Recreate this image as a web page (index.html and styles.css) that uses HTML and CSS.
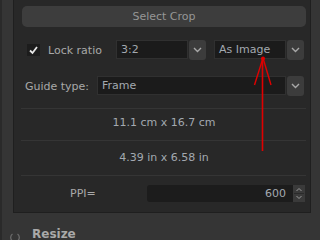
FILE: index.html
```html
<!DOCTYPE html>
<html lang="en">

<head>
  <meta charset="UTF-8">
  <meta name="viewport" content="width=device-width, initial-scale=1.0">
  <title>Crop</title>
  <link rel="stylesheet" href="styles.css">
</head>

<body>
  <div class="app">
    <div class="edge"></div>
    <div class="main">
      <div class="panel">
        <div class="big-button">Select Crop</div>

        <div class="row row-lock">
          <span class="check">
            <svg width="13" height="12" viewBox="0 0 13 12">
              <path d="M3 6.5 L5.5 9 L10 3" fill="none" stroke="#e6e6e6" stroke-width="1.8" />
            </svg>
          </span>
          <span class="label label-lock">Lock ratio</span>
          <span class="combo combo-small">3:2</span>
          <span class="drop">
            <svg width="9" height="6" viewBox="0 0 9 6"><path d="M1 1 L4.5 4.5 L8 1" fill="none" stroke="#a8a8a8" stroke-width="1.4" /></svg>
          </span>
          <span class="combo combo-small combo-second">As Image</span>
          <span class="drop">
            <svg width="9" height="6" viewBox="0 0 9 6"><path d="M1 1 L4.5 4.5 L8 1" fill="none" stroke="#a8a8a8" stroke-width="1.4" /></svg>
          </span>
        </div>

        <div class="row row-guide">
          <span class="label label-guide">Guide type:</span>
          <span class="combo combo-wide">Frame</span>
          <span class="drop">
            <svg width="9" height="6" viewBox="0 0 9 6"><path d="M1 1 L4.5 4.5 L8 1" fill="none" stroke="#a8a8a8" stroke-width="1.4" /></svg>
          </span>
        </div>

        <hr class="sep sep-first" />
        <div class="info info-cm">11.1 cm x 16.7 cm</div>
        <hr class="sep" />
        <div class="info info-in">4.39 in x 6.58 in</div>
        <hr class="sep" />

        <div class="row row-ppi">
          <span class="label label-ppi">PPI=</span>
          <span class="spin-value">600</span>
          <span class="spin-btns">
            <svg width="12" height="17" viewBox="0 0 12 17">
              <path d="M3.5 6 L6 3.5 L8.5 6" fill="none" stroke="#9a9a9a" stroke-width="1" />
              <line x1="1" y1="8.5" x2="11" y2="8.5" stroke="#2a2a2a" />
              <path d="M3.5 11 L6 13.5 L8.5 11" fill="none" stroke="#9a9a9a" stroke-width="1" />
            </svg>
          </span>
        </div>
      </div>

      <div class="section">
        <svg class="power" width="12" height="12" viewBox="0 0 12 12">
          <path d="M3.5 3 A4.3 4.3 0 1 0 8.5 3" fill="none" stroke="#6a6a6a" stroke-width="1.3" />
        </svg>
        <span class="section-title">Resize</span>
      </div>
    </div>
  </div>

  <svg class="annotation" width="320" height="240" viewBox="0 0 320 240">
    <line x1="262.5" y1="58" x2="262.5" y2="151" stroke="#e00000" stroke-width="1.6" />
    <line x1="263" y1="58" x2="254.5" y2="85" stroke="#e00000" stroke-width="1.4" />
    <line x1="263" y1="58" x2="271" y2="85" stroke="#e00000" stroke-width="1.4" />
    <circle cx="263" cy="58.5" r="2" fill="#e00000" />
  </svg>
</body>

</html>
```

FILE: styles.css
```css
body {
  margin: 0;
  font-family: "DejaVu Sans", Verdana, sans-serif;
  font-size: 11px;
  color: #a9a9a9;
  background-color: #353535;
}

.app {
  display: flex;
  width: 320px;
  height: 240px;
  overflow: hidden;
}

.edge {
  width: 2px;
  background-color: #2a2a2a;
}

.main {
  flex: 1;
  padding-left: 11px;
}

.panel {
  width: 296px;
  padding: 6px 0 10px 0;
  background-color: #282828;
  border: 1px solid #1f1f1f;
  border-top: none;
}

.big-button {
  margin-left: 8px;
  width: 284px;
  height: 21px;
  line-height: 21px;
  text-align: center;
  background-color: #3d3d3d;
  color: #969696;
  border-radius: 5px;
}

.row {
  display: flex;
  align-items: center;
}

.row-lock {
  margin-top: 13px;
  padding-left: 13px;
  height: 20px;
}

.check {
  display: flex;
  align-items: center;
  justify-content: center;
  width: 13px;
  height: 12px;
  margin-right: 8px;
  background-color: #1c1c1c;
}

.label-lock {
  width: 68px;
}

.combo {
  box-sizing: border-box;
  height: 19px;
  line-height: 17px;
  padding-left: 4px;
  align-self: flex-start;
  background-color: #1b1b1b;
  border: 1px solid #303030;
  color: #a3a9b0;
}

.combo-small {
  width: 72px;
}

.combo-second {
  margin-left: 8px;
}

.combo-wide {
  width: 189px;
}

.drop {
  display: flex;
  align-items: center;
  justify-content: center;
  width: 17px;
  height: 20px;
  margin-left: 1px;
  background-color: #3c3c3c;
  border-radius: 3px;
}

.row-guide {
  margin-top: 16px;
  padding-left: 11px;
  height: 20px;
}

.label-guide {
  width: 72px;
}

.sep {
  margin: 0 4px 0 7px;
  border: none;
  height: 1px;
  background-color: #353535;
}

.sep-first {
  margin-top: 12px;
}

.info {
  text-align: center;
  padding-left: 4px;
  color: #a3a9b0;
}

.info-cm {
  height: 31px;
  line-height: 28px;
}

.info-in {
  height: 34px;
  line-height: 33px;
}

.row-ppi {
  margin-top: 9px;
  padding-left: 56px;
  height: 17px;
}

.label-ppi {
  width: 77px;
}

.spin-value {
  box-sizing: border-box;
  width: 146px;
  height: 17px;
  line-height: 17px;
  padding-right: 7px;
  text-align: right;
  background-color: #1c1c1c;
  color: #a3a9b0;
  border-radius: 3px 0 0 3px;
}

.spin-btns {
  width: 12px;
  height: 17px;
  background-color: #3a3a3a;
}

.section {
  display: flex;
  align-items: center;
  height: 26px;
  padding-top: 8px;
}

.power {
  margin-left: -4px;
  margin-top: 6px;
}

.section-title {
  margin-left: 11px;
  font-weight: bold;
  font-size: 12px;
  color: #a9a9a9;
}

.annotation {
  position: absolute;
  left: 0;
  top: 0;
  pointer-events: none;
}
```
